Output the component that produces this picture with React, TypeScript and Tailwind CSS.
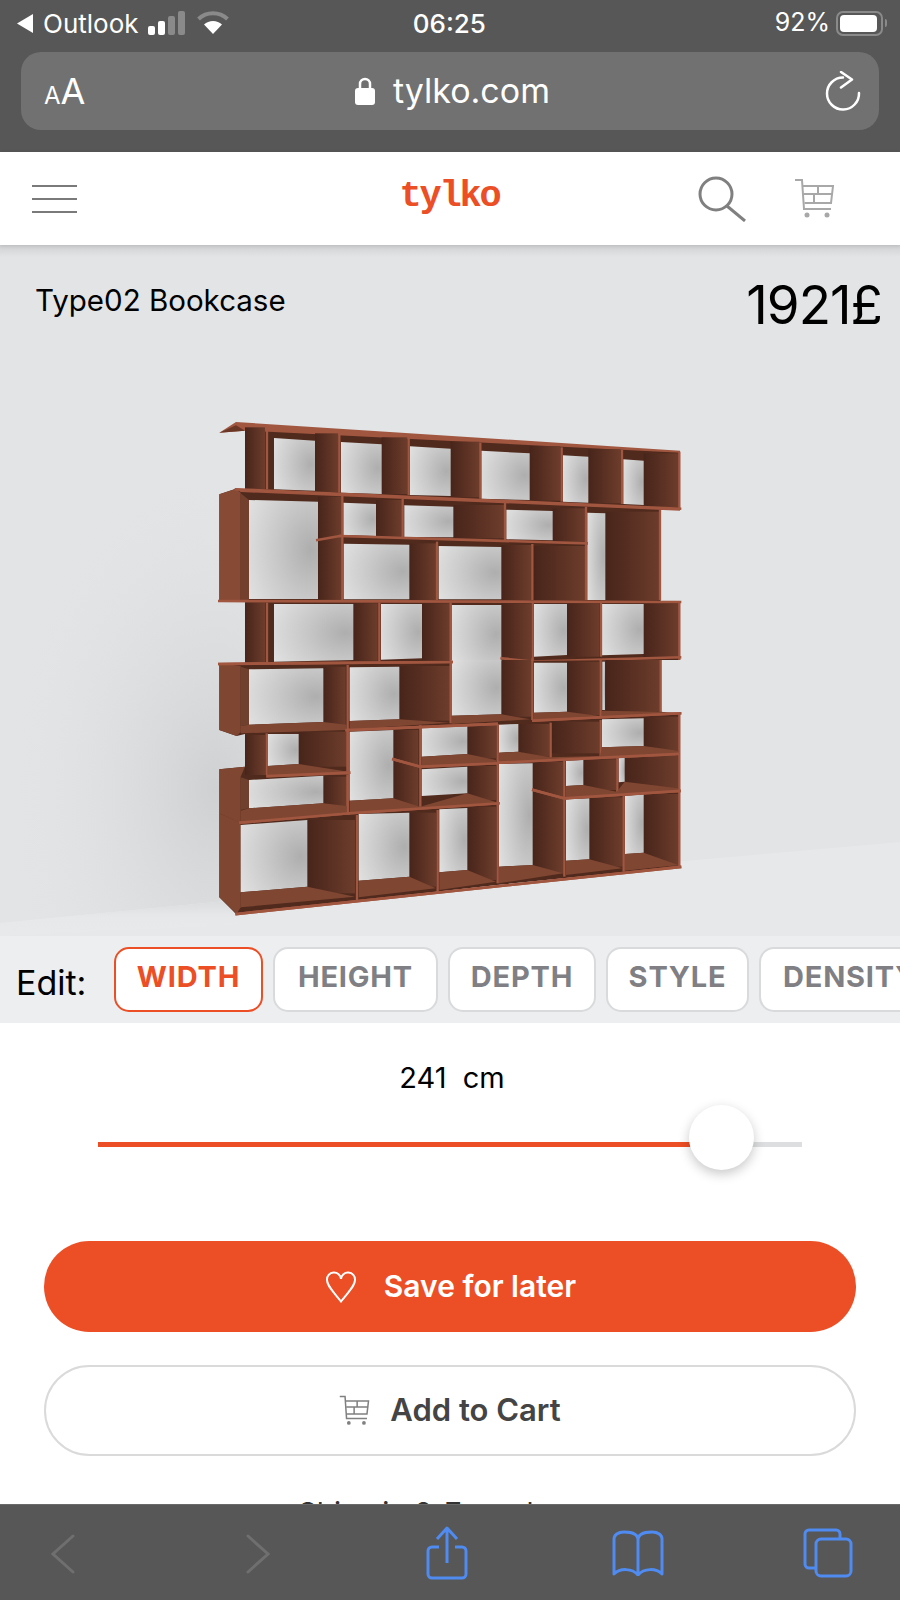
const F = { fontFamily: "Inter, 'Liberation Sans', sans-serif" };

type N = number[];
const panelsA: N[] = [[135,195,82,268],[345,415,100,276],[545,622,112,282],[752,838,125,292],[989,1080,138,302],[1165,1262,148,310],[1331,1436,160,322],[354,425,290,600],[528,605,300,410],[760,912,315,415],[1058,1155,325,425],[628,708,430,600],[904,993,435,600],[1000,1155,438,600],[1216,1382,335,600],[135,195,608,790],[460,533,610,782],[666,750,610,780],[904,993,610,780],[1101,1198,610,770],[1331,1436,610,775]];
const openA = ["222,114 345,122 345,272 222,268","423,126 545,133 545,282 423,278","630,139 752,146 752,288 630,285","844,152 989,160 989,300 844,296","1089,166 1165,170 1165,308 1089,305","1270,178 1331,182 1331,315 1270,312","147,300 354,305 354,597 147,597","430,308 528,312 528,408 430,405","613,316 760,320 760,412 613,411","919,329 1058,333 1058,421 919,418","431,431 628,434 628,598 431,598","716,438 904,441 904,598 716,598","1162,338 1216,340 1216,600 1162,600","222,612 460,612 460,780 222,785","543,612 666,612 666,775 543,779","755,615 904,615 904,790 755,790","1002,612 1101,612 1101,765 1002,770","1206,612 1331,612 1331,762 1206,766"];
const vertA: N[] = [[201,88,268],[418,100,278],[626,112,285],[841,128,296],[1085,142,305],[1266,150,312],[1438,155,328],[427,288,600],[608,296,412],[915,308,420],[1158,320,600],[711,425,600],[997,432,600],[1380,330,600],[201,608,790],[538,608,785],[752,608,790],[998,608,780],[1203,608,770],[1438,604,780]];
const lineA: N[] = [[108,268,1440,326],[58,603,1440,606],[352,420,420,408],[420,408,1160,430],[905,775,1000,785],[1000,785,1440,772]];

const panelsB: N[] = [[370,437,50,225],[598,750,48,212],[905,993,30,200],[1101,1198,35,195],[1217,1382,30,185],[135,195,255,375],[296,440,245,350],[580,655,240,470],[802,888,226,325],[802,888,348,450],[955,1048,222,320],[1054,1198,215,310],[1331,1435,200,302],[998,1090,335,670],[1150,1248,328,420],[1274,1435,318,420],[1168,1268,442,650],[1331,1435,432,650],[370,440,380,470],[322,465,510,730],[628,708,488,710],[802,888,470,690]];
const openB = ["147,58 370,55 370,216 147,224","449,52 598,50 598,208 449,213","755,30 904,30 904,193 755,197","1002,38 1101,38 1101,185 1002,188","1207,35 1215,35 1215,180 1207,180","203,252 296,252 296,342 203,348","147,390 370,377 370,460 147,475","449,245 580,240 580,445 449,452","665,232 802,228 802,312 665,320","665,358 802,350 802,430 665,438","897,224 955,222 955,305 897,308","1206,208 1331,205 1331,288 1206,292","897,342 998,340 998,645 897,650","1098,332 1150,330 1150,405 1098,408","1256,324 1274,322 1274,395 1256,397","1098,448 1168,445 1168,628 1098,632","1275,438 1331,432 1331,608 1275,612","122,525 322,510 322,710 122,727","476,492 628,488 628,680 476,692","718,478 802,474 802,660 718,667"];
const floorB = ["122,228 147,224 370,216 440,224 440,240 122,250","449,213 598,208 750,218 449,238","755,197 904,193 990,208 755,222","1002,188 1101,185 1200,198 1000,210","1205,182 1382,185 1440,190 1205,206","203,348 296,342 445,365 445,374 203,378","665,320 802,312 888,330 888,340 665,350","449,452 580,445 660,470 802,430 895,458 449,490","122,482 147,475 370,460 440,468 440,492 122,518","897,308 955,305 1050,322 1200,318 1206,292 1331,288 1435,302 1435,314 897,338","1098,408 1150,405 1250,425 1274,395 1435,415 1435,425 1098,448","897,650 998,645 1090,670 897,700","1098,632 1168,628 1268,655 1098,675","1275,612 1331,608 1435,645 1275,662","122,727 322,710 465,740 122,772","476,492 476,492","476,692 628,680 708,715 476,742","718,667 802,660 888,695 718,720"];
const vertB: N[] = [[443,45,490],[752,35,220],[997,25,210],[1202,30,205],[200,250,375],[443,235,490],[661,225,475],[893,222,700],[1052,218,325],[1202,210,320],[1438,190,650],[1093,330,680],[1252,325,430],[1271,435,665],[471,495,750],[713,480,730],[1382,30,188]];
const lineB: N[] = [[58,42,755,36],[440,240,890,222],[1000,212,1440,190],[897,338,1435,312],[665,350,890,340],[580,328,660,350],[203,378,447,368],[122,518,445,490],[445,490,895,460],[1000,420,1093,445],[1093,445,1438,423],[110,792,1440,651]];

function Marks({ panels, open, vert, line }: { panels: N[]; open: string[]; vert: N[]; line: N[] }) {
  return (
    <>
      {panels.map((p, i) => (
        <rect key={i} x={p[0]} y={p[2]} width={p[1] - p[0]} height={p[3] - p[2]} fill="url(#panel)" />
      ))}
      {open.map((p, i) => (
        <polygon key={i} points={p} fill="url(#back)" />
      ))}
      {vert.map((v, i) => (
        <line key={i} x1={v[0]} x2={v[0]} y1={v[1]} y2={v[2]} stroke="#a15640" strokeWidth={7} />
      ))}
      {line.map((l, i) => (
        <line key={i} x1={l[0]} y1={l[1]} x2={l[2]} y2={l[3]} stroke="#a15640" strokeWidth={8} strokeLinecap="square" />
      ))}
    </>
  );
}

function Scene() {
  return (
    <svg className="block w-full h-full" viewBox="0 245 900 691" preserveAspectRatio="none">
      <defs>
        <linearGradient id="panel" x1="0" x2="1" y1="0" y2="0">
          <stop offset="0" stopColor="#47241a" />
          <stop offset="1" stopColor="#6d3d2c" />
        </linearGradient>
        <radialGradient id="back" cx="0.9" cy="0.5" r="1">
          <stop offset="0" stopColor="#aeaeae" />
          <stop offset="0.5" stopColor="#c8c8c8" />
          <stop offset="1" stopColor="#e0e0e0" />
        </radialGradient>
        <linearGradient id="top" x1="0" x2="0" y1="0" y2="1">
          <stop offset="0" stopColor="#cfd1d3" />
          <stop offset="1" stopColor="#e2e4e5" />
        </linearGradient>
        <radialGradient id="shade">
          <stop offset="0" stopColor="#cfd0d2" stopOpacity="1" />
          <stop offset="1" stopColor="#e2e4e5" stopOpacity="0" />
        </radialGradient>
        <linearGradient id="floor" x1="0" x2="0" y1="0" y2="1">
          <stop offset="0" stopColor="#dbdcdd" />
          <stop offset="0.45" stopColor="#e6e8e9" />
          <stop offset="1" stopColor="#e7e9ea" />
        </linearGradient>
      </defs>
      <rect x="0" y="245" width="900" height="691" fill="#e2e4e5" />
      <rect x="0" y="245" width="900" height="12" fill="url(#top)" />
      <ellipse cx="215" cy="790" rx="215" ry="340" fill="url(#shade)" />
      <polygon points="0,923 226,901 900,842 900,936 0,936" fill="#e6e8e9" />
      <polygon points="0,923 226,901 240,925 0,936" fill="url(#floor)" />
      <g transform="translate(200 400) scale(0.33333)">
        <polygon points="135,86 1440,155 1440,330 1382,330 1382,606 1440,606 1440,780 1382,780 1382,800 135,800 135,606 58,606 58,283 108,266 135,268" fill="#4f2a1d" />
        <polygon points="58,98 108,66 1440,152 1440,158 135,92" fill="#a15640" />
        <polygon points="58,98 108,76 135,92" fill="#6a3626" />
        <polygon points="58,283 108,266 122,278 122,604 58,604" fill="#874a35" />
        <polygon points="122,280 147,300 147,600 122,600" fill="#74402e" />
        <polygon points="108,266 1440,326 1440,332 122,276" fill="#a15640" />
        <Marks panels={panelsA} open={openA} vert={vertA} line={lineA} />
      </g>
      <g transform="translate(200 650)">
        <g transform="scale(0.33333)">
          <polygon points="58,40 755,34 1382,30 1382,190 1440,190 1440,650 890,705 470,752 108,792 58,742 58,358 135,350 135,252 110,258 58,240" fill="#4f2a1d" />
          <polygon points="58,40 122,48 122,246 110,258 58,240" fill="#7f4631" />
          <polygon points="122,50 147,58 147,224 122,228" fill="#70402e" />
          <polygon points="58,358 135,350 122,380 122,520 58,490" fill="#7f4631" />
          <polygon points="122,382 147,390 147,475 122,480" fill="#70402e" />
          <polygon points="58,490 122,518 122,772 110,792 58,742" fill="#7f4631" />
          <Marks panels={panelsB} open={openB} vert={vertB} line={lineB} />
          {floorB.map((p, i) => (
            <polygon key={i} points={p} fill="#7f4632" />
          ))}
          <Marks panels={[]} open={[]} vert={[]} line={lineB} />
        </g>
      </g>
    </svg>
  );
}

function CartIcon({ className, color }: { className: string; color: string }) {
  return (
    <svg className={className} viewBox="0 0 41 41" fill="none" stroke={color} strokeWidth="2">
      <path d="M1 2h7l2 29h27" />
      <path d="M9 8h30l-2 17H10.500" />
      <path d="M9.500 16h29M24 8v8M20 16v9" />
      <circle cx="13" cy="37" r="2.500" fill={color} stroke="none" />
      <circle cx="33" cy="37" r="2.500" fill={color} stroke="none" />
    </svg>
  );
}

const tab = "h-[65px] rounded-[15px] bg-white border-2 text-[29px] font-bold flex items-center pb-[5px] tracking-[0.8px]";

export default function App() {
  return (
    <div className="w-[900px] h-[1600px] flex flex-col overflow-hidden bg-white text-black" style={F}>
      <div className="h-[152px] shrink-0 bg-[#575757] text-white flex flex-col">
        <div className="h-[46px] mb-[6px] px-[17px] flex items-center text-[26px]">
          <svg className="w-[16px] h-[19px] mr-[10px]" viewBox="0 0 16 19"><path d="M16 0v19L0 9.500z" fill="#fff" /></svg>
          <span className="w-[105px]">Outlook</span>
          <svg className="w-[38px] h-[24px]" viewBox="0 0 38 24">
            <rect x="0" y="15" width="7" height="9" rx="2" fill="#fff" />
            <rect x="10" y="10" width="7" height="14" rx="2" fill="#fff" />
            <rect x="20" y="5" width="7" height="19" rx="2" fill="#8a8a8a" />
            <rect x="30" y="0" width="7" height="24" rx="2" fill="#8a8a8a" />
          </svg>
          <svg className="w-[32px] h-[24px] ml-[11px]" viewBox="0 0 32 24">
            <path d="M1.500 8a21 21 0 0 1 29 0" fill="none" stroke="#8a8a8a" strokeWidth="4" />
            <path d="M7 13.500a13 13 0 0 1 18 0L16 23z" fill="#fff" />
          </svg>
          <span className="flex-1 text-center font-medium mr-[105px]">06:25</span>
          <span className="text-[25px] mr-[6px]">92%</span>
          <div className="w-[47px] h-[25px] border-2 border-[#8a8a8a] rounded-[7px] p-[2px] shrink-0">
            <div className="w-[37px] h-full bg-white rounded-[4px]" />
          </div>
          <div className="w-[2px] h-[8px] bg-[#8a8a8a] ml-[2px] mr-[-4px] rounded-r-[2px]" />
        </div>
        <div className="mx-[21px] h-[78px] rounded-[20px] bg-[#717171] flex items-center px-[23px]">
          <span className="w-[291px] leading-none flex items-baseline">
            <span className="text-[24px]">A</span>
            <span className="text-[36px]">A</span>
          </span>
          <svg className="w-[20px] h-[28px] ml-[20px] mr-[18px]" viewBox="0 0 20 28">
            <path d="M5 13V7a5 5 0 0 1 10 0v6" fill="none" stroke="#fff" strokeWidth="2.500" />
            <rect x="0" y="11" width="20" height="17" rx="3" fill="#fff" />
          </svg>
          <span className="text-[34px] flex-1 leading-none">tylko.com</span>
          <svg className="w-[36px] h-[40px] mr-[-5px]" viewBox="0 0 36 40" fill="none" stroke="#fff" strokeWidth="2.500" strokeLinecap="round" strokeLinejoin="round">
            <path d="M18 6.500A16 16 0 1 0 34 22" />
            <path d="M16 1l11 7.500-11 8" />
          </svg>
        </div>
      </div>

      <div className="h-[93px] shrink-0 bg-white flex items-center relative z-10 shadow-[0_1px_4px_rgba(0,0,0,0.12)]">
        <div className="ml-[32px] w-[45px] flex flex-col gap-[11px]">
          <div className="h-[2px] bg-[#7a7a7a]" />
          <div className="h-[2px] bg-[#7a7a7a]" />
          <div className="h-[2px] bg-[#7a7a7a]" />
        </div>
        <div className="flex-1 text-center text-[37px] leading-none font-bold tracking-[-2.200px] text-[#ec4e25] ml-[124px] pb-[4px] font-['Liberation_Mono',monospace]">tylko</div>
        <svg className="w-[48px] h-[46px] mr-[48px]" viewBox="0 0 48 46" fill="none" stroke="#808080" strokeWidth="3">
          <circle cx="18" cy="18" r="16" />
          <path d="M29 30l18 15" />
        </svg>
        <CartIcon className="w-[41px] h-[41px] mr-[65px]" color="#a8a8a8" />
      </div>

      <div className="h-[691px] shrink-0 relative">
        <Scene />
        <div className="absolute left-[35px] top-[36px] text-[29.500px] leading-[38px]">Type02 Bookcase</div>
        <div className="absolute right-[18px] top-[30px] text-[53px] leading-[60px] tracking-[-1px]">1921£</div>
      </div>

      <div className="h-[87px] shrink-0 bg-[#eceef0] flex items-center overflow-hidden pl-[16px]">
        <span className="text-[34px] w-[98px] shrink-0 pt-[6px]">Edit:</span>
        <div className="flex gap-[10px] shrink-0">
          <div className={tab + " w-[149px] justify-center border-[#ec4e25] text-[#ec4e25]"}>WIDTH</div>
          <div className={tab + " w-[165px] justify-center border-[#d8dadc] text-[#808084]"}>HEIGHT</div>
          <div className={tab + " w-[148px] justify-center border-[#d8dadc] text-[#808084]"}>DEPTH</div>
          <div className={tab + " w-[143px] justify-center border-[#d8dadc] text-[#808084]"}>STYLE</div>
          <div className={tab + " w-[170px] pl-[22px] border-[#d8dadc] text-[#808084]"}>DENSITY</div>
        </div>
      </div>

      <div className="flex-1 min-h-0 overflow-hidden bg-white">
        <div className="text-center text-[29px] leading-[34px] mt-[38px] pl-[4px]">241&nbsp; cm</div>
        <div className="mx-[98px] mt-[10px] h-[65px] flex items-center relative">
          <div className="h-[5px] w-[592px] bg-[#ec4e25] mt-[13px]" />
          <div className="h-[5px] flex-1 bg-[#dcdedf] mt-[13px]" />
          <div className="absolute left-[591px] top-0 w-[65px] h-[65px] rounded-full bg-white shadow-[0_4px_12px_rgba(0,0,0,0.22)]" />
        </div>
        <div className="mx-[44px] mt-[71px] h-[91px] rounded-full bg-[#ec4e25] text-white flex items-center justify-center gap-[26px] text-[30px] font-semibold">
          <svg className="w-[34px] h-[32px]" viewBox="0 0 34 32" fill="none" stroke="#fff" strokeWidth="2">
            <path d="M17 30.500C9 20 3 15 3 9a7 7 0 0 1 14-1 7 7 0 0 1 14 1c0 6-6 11-14 21.500z" />
          </svg>
          <span>Save for later</span>
        </div>
        <div className="mx-[44px] mt-[33px] h-[91px] rounded-full border-2 border-[#dadada] flex items-center justify-center gap-[20px] text-[31px] font-semibold text-[#444444]">
          <CartIcon className="w-[31px] h-[31px]" color="#808080" />
          <span>Add to Cart</span>
        </div>
        <div className="text-center text-[29px] leading-[34px] mt-[40px] pr-[44px] text-[#333333]">Ships in 2-7 weeks</div>
      </div>

      <div className="h-[96px] shrink-0 bg-[#575757] border-t border-[#6a6a6a] flex items-center">
        <svg className="w-[24px] h-[40px] ml-[51px] mt-[2px]" viewBox="0 0 24 40" fill="none" stroke="#6f6f6f" strokeWidth="3" strokeLinecap="round"><path d="M22 2L2 20l20 18" /></svg>
        <svg className="w-[24px] h-[40px] ml-[171px] mt-[2px]" viewBox="0 0 24 40" fill="none" stroke="#6f6f6f" strokeWidth="3" strokeLinecap="round"><path d="M2 2l20 18L2 38" /></svg>
        <svg className="w-[42px] h-[54px] ml-[156px]" viewBox="0 0 42 54" fill="none" stroke="#4f8bf0" strokeWidth="3" strokeLinejoin="round">
          <path d="M13 21H6a4 4 0 0 0-4 4v23a4 4 0 0 0 4 4h30a4 4 0 0 0 4-4V25a4 4 0 0 0-4-4h-7" />
          <path d="M21 37V3M11 13L21 2l10 11" />
        </svg>
        <svg className="w-[52px] h-[46px] ml-[144px]" viewBox="0 0 52 46" fill="none" stroke="#4f8bf0" strokeWidth="3" strokeLinejoin="round">
          <path d="M26 10C26 4 20 2 12 2 6 2 2 5 2 9v35c6-6 18-6 24 1 6-7 18-7 24-1V9c0-4-4-7-10-7-8 0-14 2-14 8zM26 10v34" />
        </svg>
        <svg className="w-[50px] h-[50px] ml-[139px]" viewBox="0 0 50 50" fill="none" stroke="#4f8bf0" strokeWidth="3">
          <path d="M37 10V6a4 4 0 0 0-4-4H6a4 4 0 0 0-4 4v30a4 4 0 0 0 4 4h6" />
          <rect x="13" y="11" width="35" height="37" rx="5" />
        </svg>
      </div>
    </div>
  );
}
